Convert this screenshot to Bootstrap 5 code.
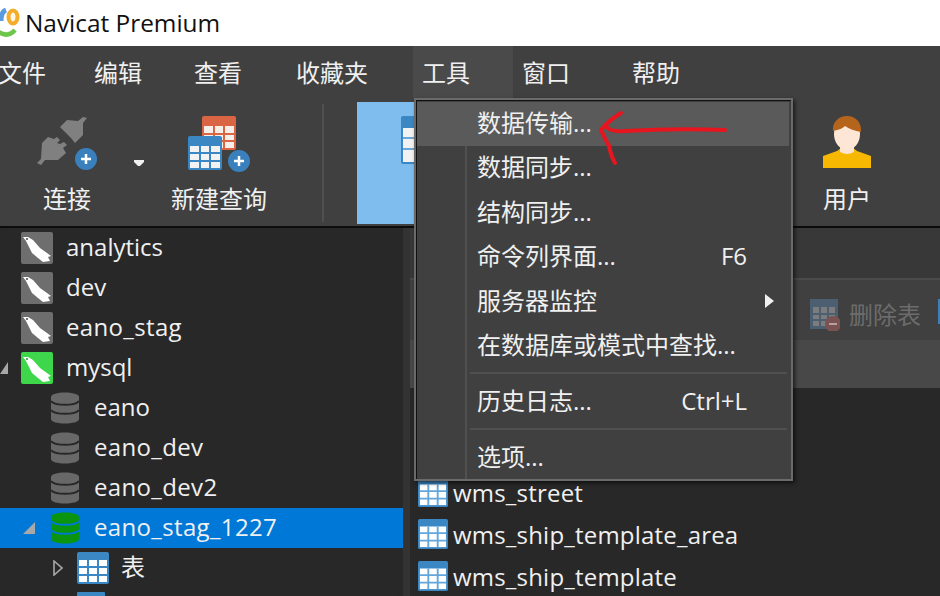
<!DOCTYPE html>
<html lang="zh-CN">
<head>
    <meta charset="UTF-8">
    <title>Navicat Premium</title>
    <link href="https://cdn.jsdelivr.net/npm/bootstrap@5.3.0/dist/css/bootstrap.min.css" rel="stylesheet">
    <style>
        body {
            width: 940px;
            height: 596px;
            overflow: hidden;
            position: relative;
            background: #282828;
            color: #f0f0f0;
            font-family: "Open Sans", "Noto Sans CJK SC", sans-serif;
            font-size: 24px;
            line-height: 32px;
        }

        .title-bar {
            height: 46px;
            background: #fff;
            color: #111;
            gap: 5px;
        }

        .title-bar span {
            font-size: 24.4px;
        }

        .menu-bar {
            height: 52px;
            background: #404040;
            margin: 0;
            padding: 0;
        }

        .menu-entry {
            height: 52px;
            padding: 11px 43px 0 9px;
        }

        .menu-entry.first { margin-left: -11px; padding-right: 39px; }
        .menu-entry.wide { padding-right: 45px; }
        .menu-entry.wider { padding-right: 53px; }
        .menu-entry.open { background: #4a4a4a; }

        .tool-bar {
            height: 130px;
            background: #404040;
            border-bottom: 2px solid #0c0c0c;
        }

        .tool-btn {
            width: 134px;
            padding-top: 18px;
        }

        .tool-btn svg { display: block; height: 56px; }
        .tool-btn span { margin-top: 11px; font-size: 24px; }

        .tool-caret {
            width: 18px;
            padding-top: 62px;
        }

        .tool-sep {
            width: 2px;
            height: 118px;
            margin: 6px 33px 0 36px;
            background: #505050;
        }

        .tool-active {
            width: 110px;
            height: 122px;
            margin-top: 4px;
            padding: 14px 0 0 44px;
            background: #7fbdee;
        }

        .tool-user {
            width: 100px;
            margin-left: auto;
            margin-right: 43px;
        }

        .side-tree {
            width: 403px;
            height: 368px;
            overflow: hidden;
            background: #282828;
            flex-shrink: 0;
        }

        .tree-row {
            height: 40px;
            flex-shrink: 0;
            background: transparent;
            border: 0;
            border-radius: 0;
            padding: 0;
            color: #f0f0f0;
            position: relative;
        }

        .tree-row span { margin-bottom: 2px; }
        .tree-row.picked { background: #0078d7; }
        .tree-row.lvl1 { padding-left: 21px; }
        .tree-row.lvl2 { padding-left: 51px; }
        .tree-row.lvl3 { padding-left: 77px; }
        .tree-row.lvl1 svg { margin-right: 13px; }
        .tree-row.lvl2 svg { margin-right: 15px; }
        .tree-row.lvl3 svg { margin-right: 12px; }
        .tree-row.snake span { letter-spacing: .35px; }

        .tree-arrow {
            position: absolute;
            top: 14px;
        }

        .tree-row .tree-arrow { margin: 0; }

        .side-strip {
            width: 7px;
            background: #333;
            flex-shrink: 0;
        }

        .right-pane {
            flex-grow: 1;
            min-width: 0;
            background: #282828;
        }

        .tab-strip {
            height: 52px;
            background: #383838;
            border-bottom: 2px solid #4a4a4a;
        }

        .obj-bar {
            height: 60px;
            background: #404040;
            padding: 19px 0 0 400px;
            color: #6c6c6c;
            gap: 9px;
            white-space: nowrap;
        }

        .obj-bar svg { flex-shrink: 0; }

        .obj-end {
            width: 3px;
            height: 25px;
            margin-left: 8px;
            flex-shrink: 0;
            background: #3f7fb5;
        }

        .obj-head {
            height: 48px;
            background: #484848;
        }

        .table-list {
            padding: 88px 0 0 8px;
        }

        .table-row {
            height: 42px;
            gap: 5px;
        }

        .table-row span {
            margin-top: 1px;
            letter-spacing: .2px;
        }

        .tools-menu {
            position: absolute;
            left: 414px;
            top: 98px;
            width: 379px;
            height: 383px;
            display: block;
            padding: 2px 2px 0 1px;
            margin: 0;
            background: #404040;
            color: #f0f0f0;
            border: 2px solid #6a6a6a;
            border-radius: 0;
            box-shadow: 2px 2px 4px rgba(0, 0, 0, .6);
            font-size: 24px;
        }

        .tools-menu::before {
            content: "";
            position: absolute;
            left: 0;
            top: 0;
            right: 0;
            bottom: 0;
            border-top: 1px solid #111;
            border-left: 1px solid #111;
            pointer-events: none;
        }

        .menu-gutter {
            position: absolute;
            left: 49px;
            top: 46px;
            bottom: 0;
            width: 2px;
            background: #505050;
        }

        .tools-menu .dropdown-item {
            height: 44.5px;
            padding: 5px 8px 0 60px;
            color: #f0f0f0;
            background: transparent;
            line-height: 32px;
            position: relative;
        }

        .tools-menu .dropdown-item.hot { background: #5a5a5a; height: 44px; }
        .tools-menu .dropdown-divider {
            margin: 3px 2px 6.5px 53px;
            border-top: 2px solid #505050;
            opacity: 1;
        }

        .tools-menu .item-key { position: absolute; right: 42px; top: 5px; }
        .tools-menu .item-sub { position: absolute; right: 15px; top: 14px; }

        .red-mark {
            position: absolute;
            left: 595px;
            top: 105px;
            z-index: 1001;
        }
    </style>
</head>
<body>
    <header class="title-bar d-flex align-items-center">
        <svg width="20" height="30" viewBox="0 0 20 30">
            <path d="M1 13Q1 4 6 2" fill="none" stroke="#5b9be0" stroke-width="5"/>
            <ellipse cx="13" cy="9" rx="4.5" ry="6.5" fill="#fff6e6" stroke="#f3ad2b" stroke-width="4"/>
            <path d="M-1 24Q8 30 15 22" fill="none" stroke="#6cc64a" stroke-width="4.5"/>
        </svg>
        <span>Navicat Premium</span>
    </header>

    <nav class="menu-bar d-flex">
        <div class="menu-entry first">文件</div>
        <div class="menu-entry">编辑</div>
        <div class="menu-entry wide">查看</div>
        <div class="menu-entry wide">收藏夹</div>
        <div class="menu-entry open">工具</div>
        <div class="menu-entry wider">窗口</div>
        <div class="menu-entry">帮助</div>
    </nav>

    <div class="tool-bar d-flex">
        <div class="tool-btn d-flex flex-column align-items-center">
            <svg width="62" height="56" viewBox="0 0 62 56">
                <g fill="#808080">
                    <path d="M24 11L31 4L42 5L47 1L51 2L47 7L47 19L39 27L35 22Z"/>
                    <path d="M1 47L5 43L6 27L12 21L18 23L21 21L24 24L21 27L24 28L28 26L31 29L27 32L30 37L22 44L9 44L5 49Z"/>
                </g>
                <circle cx="50" cy="43" r="11" fill="#3a80bd"/>
                <path d="M50 38v10M45 43h10" stroke="#fff" stroke-width="2.5"/>
            </svg>
            <span>连接</span>
        </div>
        <div class="tool-caret">
            <svg class="d-block" width="10" height="6" viewBox="0 0 10 6"><path d="M0 0h10v2L6 6H4L0 2z" fill="#f0f0f0"/></svg>
        </div>
        <div class="tool-btn d-flex flex-column align-items-center">
            <svg width="62" height="56" viewBox="0 0 62 56">
                <rect x="14" y="0" width="34" height="34" rx="2" fill="#d96545"/>
                <path d="M16 10h30v22H16z" fill="#f6efe9"/>
                <path d="M16 18h30M16 25h30M26 10v22M36 10v22" stroke="#d96545" stroke-width="2"/>
                <rect x="0" y="20" width="34" height="34" rx="2" fill="#3a87c4"/>
                <path d="M2 30h30v22H2z" fill="#f2f2f2"/>
                <path d="M2 37h30M2 45h30M12 30v22M22 30v22" stroke="#3a87c4" stroke-width="2"/>
                <circle cx="51" cy="45" r="11" fill="#3a80bd"/>
                <path d="M51 40v10M46 45h10" stroke="#fff" stroke-width="2.5"/>
            </svg>
            <span>新建查询</span>
        </div>
        <div class="tool-sep"></div>
        <div class="tool-active">
            <svg class="d-block" width="34" height="48" viewBox="0 0 34 48">
                <rect width="34" height="48" rx="2" fill="#3a87c4"/>
                <path d="M2 12h30v34H2z" fill="#f2f2f2"/>
                <path d="M2 22h30M2 33h30" stroke="#6aa8d8" stroke-width="2"/>
            </svg>
        </div>
        <div class="tool-btn tool-user d-flex flex-column align-items-center">
            <svg width="48" height="56" viewBox="0 0 48 56">
                <path d="M0 52V40l14-5 4-3h12l4 3 14 5v12z" fill="#f6b800"/>
                <path d="M17 28h14v8q-7 4-14 0z" fill="#fbe3d0"/>
                <ellipse cx="24" cy="18" rx="13" ry="16" fill="#fde6d5"/>
                <path d="M10 15C9 6 16 0 24 0s15 6 14 16c-6-1-12-3-16-6-2 2-6 4-12 5z" fill="#b5641c"/>
            </svg>
            <span>用户</span>
        </div>
    </div>

    <div class="d-flex">
        <div class="side-tree list-group">
            <div class="tree-row lvl1 list-group-item d-flex align-items-center">
                <svg width="32" height="32" viewBox="0 0 32 32"><rect width="32" height="32" rx="2" fill="#6e6e6e"/><path d="M2 5L7 5L12 8L19 16L26 21L30 24L27 25L29 29L22 30L17 26L11 21L7 13L5 9Z" fill="#fff"/><circle cx="6" cy="7" r="1" fill="#444"/></svg>
                <span>analytics</span>
            </div>
            <div class="tree-row lvl1 list-group-item d-flex align-items-center">
                <svg width="32" height="32" viewBox="0 0 32 32"><rect width="32" height="32" rx="2" fill="#6e6e6e"/><path d="M2 5L7 5L12 8L19 16L26 21L30 24L27 25L29 29L22 30L17 26L11 21L7 13L5 9Z" fill="#fff"/><circle cx="6" cy="7" r="1" fill="#444"/></svg>
                <span>dev</span>
            </div>
            <div class="tree-row lvl1 snake list-group-item d-flex align-items-center">
                <svg width="32" height="32" viewBox="0 0 32 32"><rect width="32" height="32" rx="2" fill="#6e6e6e"/><path d="M2 5L7 5L12 8L19 16L26 21L30 24L27 25L29 29L22 30L17 26L11 21L7 13L5 9Z" fill="#fff"/><circle cx="6" cy="7" r="1" fill="#444"/></svg>
                <span>eano_stag</span>
            </div>
            <div class="tree-row lvl1 list-group-item d-flex align-items-center">
                <svg class="tree-arrow" style="left:0" width="8" height="12" viewBox="0 0 8 12"><path d="M8 0v12H0z" fill="#a8a8a8"/></svg>
                <svg width="32" height="32" viewBox="0 0 32 32"><rect width="32" height="32" rx="2" fill="#3ed64a"/><path d="M2 5L7 5L12 8L19 16L26 21L30 24L27 25L29 29L22 30L17 26L11 21L7 13L5 9Z" fill="#fff"/><circle cx="6" cy="7" r="1" fill="#2a8a30"/></svg>
                <span>mysql</span>
            </div>
            <div class="tree-row lvl2 list-group-item d-flex align-items-center">
                <svg width="28" height="32" viewBox="0 0 28 32"><path d="M0 5c0-6 28-6 28 0v22c0 6-28 6-28 0z" fill="#686868"/><path d="M0 9c4 5 24 5 28 0M0 18c4 5 24 5 28 0" fill="none" stroke="#282828" stroke-width="2"/></svg>
                <span>eano</span>
            </div>
            <div class="tree-row lvl2 snake list-group-item d-flex align-items-center">
                <svg width="28" height="32" viewBox="0 0 28 32"><path d="M0 5c0-6 28-6 28 0v22c0 6-28 6-28 0z" fill="#686868"/><path d="M0 9c4 5 24 5 28 0M0 18c4 5 24 5 28 0" fill="none" stroke="#282828" stroke-width="2"/></svg>
                <span>eano_dev</span>
            </div>
            <div class="tree-row lvl2 snake list-group-item d-flex align-items-center">
                <svg width="28" height="32" viewBox="0 0 28 32"><path d="M0 5c0-6 28-6 28 0v22c0 6-28 6-28 0z" fill="#686868"/><path d="M0 9c4 5 24 5 28 0M0 18c4 5 24 5 28 0" fill="none" stroke="#282828" stroke-width="2"/></svg>
                <span>eano_dev2</span>
            </div>
            <div class="tree-row lvl2 snake picked list-group-item d-flex align-items-center">
                <svg class="tree-arrow" style="left:23px" width="12" height="12" viewBox="0 0 12 12"><path d="M12 0v12H0z" fill="#a8a8a8"/></svg>
                <svg width="28" height="32" viewBox="0 0 28 32"><path d="M0 5c0-6 28-6 28 0v22c0 6-28 6-28 0z" fill="#0a9410"/><path d="M0 9c4 5 24 5 28 0M0 18c4 5 24 5 28 0" fill="none" stroke="#0078d7" stroke-width="2"/></svg>
                <span>eano_stag_1227</span>
            </div>
            <div class="tree-row lvl3 list-group-item d-flex align-items-center">
                <svg class="tree-arrow" style="left:53px;top:12px" width="10" height="16" viewBox="0 0 10 16"><path d="M1 1l8 7-8 7z" fill="none" stroke="#a8a8a8" stroke-width="1.6"/></svg>
                <svg width="32" height="32" viewBox="0 0 32 32"><rect width="32" height="32" rx="2" fill="#3a87c4"/><path d="M2 8h28v22H2z" fill="#fff"/><path d="M2 15h28M2 23h28M11 8v22M21 8v22" stroke="#3a87c4" stroke-width="2"/></svg>
                <span>表</span>
            </div>
            <div class="tree-row lvl3 list-group-item d-flex align-items-start">
                <svg class="mt-1" width="28" height="32" viewBox="0 0 28 32"><rect width="28" height="32" rx="1" fill="#3a87c4"/></svg>
            </div>
        </div>
        <div class="side-strip"></div>
        <div class="right-pane">
            <div class="tab-strip"></div>
            <div class="obj-bar d-flex">
                <svg width="30" height="32" viewBox="0 0 30 32">
                    <rect width="28" height="30" fill="#4b5f70"/>
                    <path d="M3 8h22v19H3z" fill="#7c7c7c"/>
                    <path d="M3 15h22M3 21h22M10 8v19M18 8v19" stroke="#4b5f70" stroke-width="2"/>
                    <circle cx="23" cy="25" r="8" fill="#7a5252"/>
                    <path d="M19 25h8" stroke="#b9a0a0" stroke-width="2"/>
                </svg>
                <span>删除表</span>
                <div class="obj-end"></div>
            </div>
            <div class="obj-head"></div>
            <div class="table-list">
                <div class="table-row d-flex">
                    <svg width="30" height="32" viewBox="0 0 32 32"><rect width="32" height="32" rx="2" fill="#3a87c4"/><path d="M2 8h28v22H2z" fill="#fff"/><path d="M2 15h28M2 23h28M11 8v22M21 8v22" stroke="#62a6dc" stroke-width="2"/></svg>
                    <span>wms_street</span>
                </div>
                <div class="table-row d-flex">
                    <svg width="30" height="32" viewBox="0 0 32 32"><rect width="32" height="32" rx="2" fill="#3a87c4"/><path d="M2 8h28v22H2z" fill="#fff"/><path d="M2 15h28M2 23h28M11 8v22M21 8v22" stroke="#62a6dc" stroke-width="2"/></svg>
                    <span>wms_ship_template_area</span>
                </div>
                <div class="table-row d-flex">
                    <svg width="30" height="32" viewBox="0 0 32 32"><rect width="32" height="32" rx="2" fill="#3a87c4"/><path d="M2 8h28v22H2z" fill="#fff"/><path d="M2 15h28M2 23h28M11 8v22M21 8v22" stroke="#62a6dc" stroke-width="2"/></svg>
                    <span>wms_ship_template</span>
                </div>
            </div>
        </div>
    </div>

    <div class="tools-menu dropdown-menu">
        <div class="menu-gutter"></div>
        <div class="dropdown-item hot">数据传输...</div>
        <div class="dropdown-item">数据同步...</div>
        <div class="dropdown-item">结构同步...</div>
        <div class="dropdown-item">命令列界面...<span class="item-key">F6</span></div>
        <div class="dropdown-item">服务器监控
            <svg class="item-sub" width="9" height="14" viewBox="0 0 9 14"><path d="M0 0l9 7-9 7z" fill="#f0f0f0"/></svg>
        </div>
        <div class="dropdown-item">在数据库或模式中查找...</div>
        <hr class="dropdown-divider">
        <div class="dropdown-item">历史日志...<span class="item-key">Ctrl+L</span></div>
        <hr class="dropdown-divider">
        <div class="dropdown-item">选项...</div>
    </div>

    <svg class="red-mark" width="135" height="62" viewBox="0 0 135 62">
        <path d="M26 8Q14 15 6 25q3 7 8 16q2 10 6 17M12 22q3 5 18 4 50-3 100-1" fill="none" stroke="#e8141e" stroke-width="4" stroke-linecap="round" stroke-linejoin="round"/>
    </svg>

    <script src="https://cdn.jsdelivr.net/npm/bootstrap@5.3.0/dist/js/bootstrap.bundle.min.js"></script>
</body>
</html>
